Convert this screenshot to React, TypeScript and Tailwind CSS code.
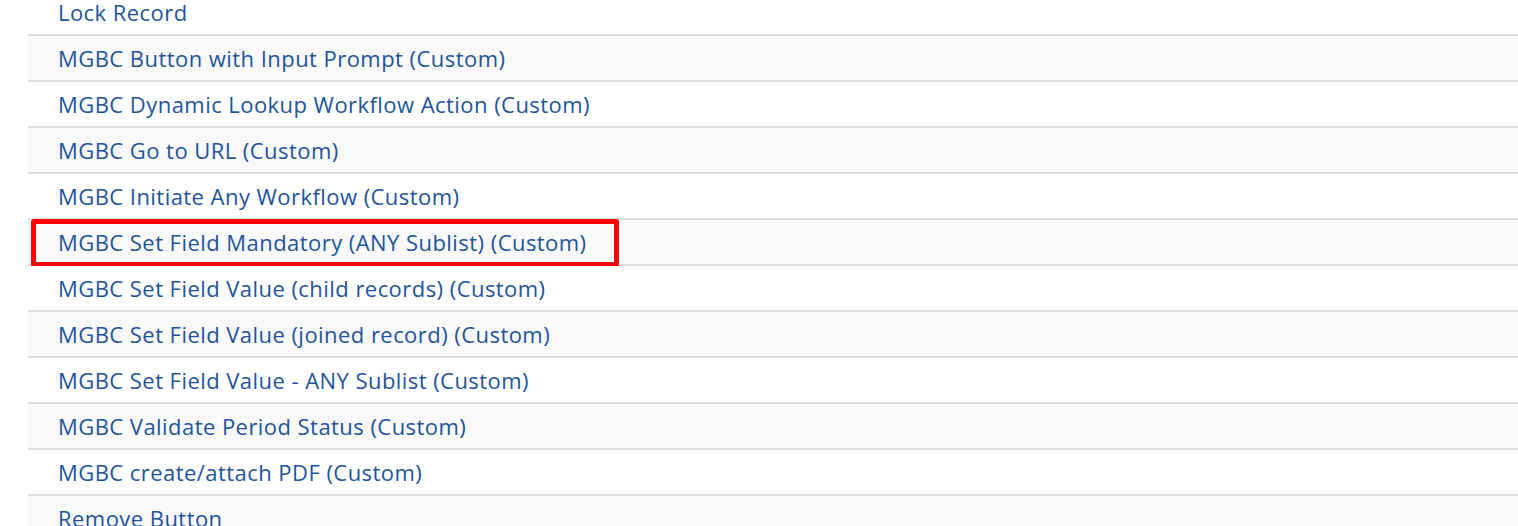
import React from "react";

const items = [
  "Lock Record",
  "MGBC Button with Input Prompt (Custom)",
  "MGBC Dynamic Lookup Workflow Action (Custom)",
  "MGBC Go to URL (Custom)",
  "MGBC Initiate Any Workflow (Custom)",
  "MGBC Set Field Mandatory (ANY Sublist) (Custom)",
  "MGBC Set Field Value (child records) (Custom)",
  "MGBC Set Field Value (joined record) (Custom)",
  "MGBC Set Field Value - ANY Sublist (Custom)",
  "MGBC Validate Period Status (Custom)",
  "MGBC create/attach PDF (Custom)",
  "Remove Button",
];

const highlighted = 5;

function App() {
  return (
    <div className="h-[526px] w-[1518px] overflow-hidden bg-white font-['Open_Sans',sans-serif]">
      <ul className="-mt-[10px] ml-[28px]">
        {items.map((label, i) => (
          <li
            key={label}
            className={`relative flex h-[46px] items-center border-b-2 border-[#dddddd] pl-[30px] text-[22px] tracking-[0.45px] text-[#22549c] ${
              i % 2 == 1 ? "bg-[#f9f9f9]" : "bg-white"
            }`}
          >
            <span className="cursor-pointer">{label}</span>
            {i === highlighted && (
              <div className="absolute left-[3px] top-[-1px] h-[48px] w-[588px] rounded-[3px] border-[5px] border-[#ff0000]" />
            )}
          </li>
        ))}
      </ul>
    </div>
  );
}

export default App;
